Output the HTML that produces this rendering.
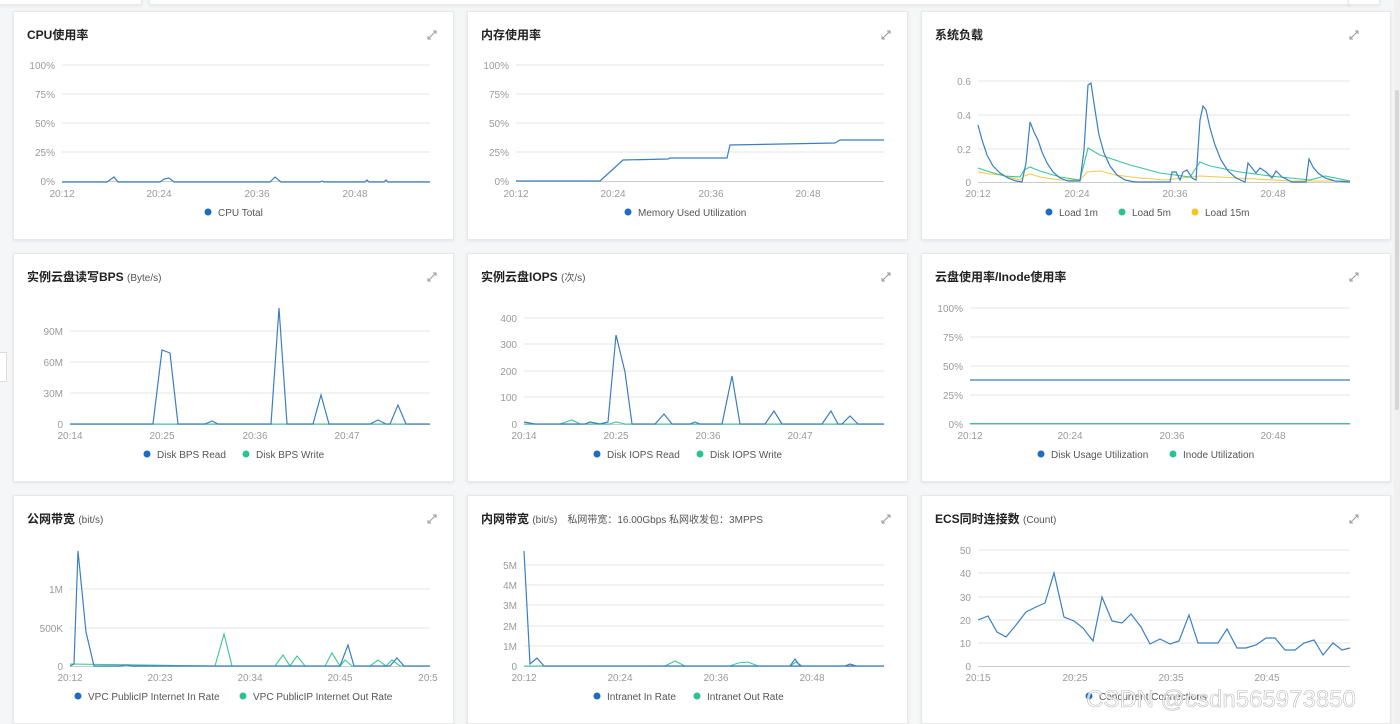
<!DOCTYPE html>
<html><head><meta charset="utf-8"><style>
html,body{margin:0;padding:0;width:1400px;height:724px;background:#f5f6f7;overflow:hidden;font-family:"Liberation Sans","Noto Sans CJK SC",sans-serif;}
.p{position:absolute;background:#fff;border:1px solid #e8e8e8;box-shadow:0 1px 3px rgba(0,0,0,.08);}
svg{position:absolute;left:0;top:0}
text{font-family:"Liberation Sans","Noto Sans CJK SC",sans-serif}
.t{font-size:12px;font-weight:bold;fill:#222}
.u{font-size:10px;fill:#555;font-weight:normal}
.ax{font-size:10px;fill:#9a9a9a}
.lg{font-size:10px;fill:#555}
.g{stroke:#e6e6e6;stroke-width:1}
.b{fill:none;stroke:#3a7fc1;stroke-width:1.2}
.gr{fill:none;stroke:#3ac59a;stroke-width:1.1}
.y{fill:none;stroke:#f3c94a;stroke-width:1.1}
.ic{stroke:#999;stroke-width:1;fill:none}
</style></head><body>
<div class="p" style="left:-2px;top:-8px;width:142px;height:11px"></div>
<div class="p" style="left:149px;top:-8px;width:1200px;height:11px"></div>
<div class="p" style="left:1348px;top:-8px;width:30px;height:11px"></div>
<div class="p" style="left:13px;top:11px;width:439px;height:227px"></div>
<div class="p" style="left:467px;top:11px;width:439px;height:227px"></div>
<div class="p" style="left:921px;top:11px;width:468px;height:227px"></div>
<div class="p" style="left:13px;top:253px;width:439px;height:227px"></div>
<div class="p" style="left:467px;top:253px;width:439px;height:227px"></div>
<div class="p" style="left:921px;top:253px;width:468px;height:227px"></div>
<div class="p" style="left:13px;top:495px;width:439px;height:227px"></div>
<div class="p" style="left:467px;top:495px;width:439px;height:227px"></div>
<div class="p" style="left:921px;top:495px;width:468px;height:227px"></div>
<div style="position:absolute;left:1394px;top:0;width:6px;height:724px;background:#f0f0f0"></div>
<div style="position:absolute;left:1395px;top:90px;width:4px;height:320px;background:#d6d6d6;border-radius:2px"></div>
<div style="position:absolute;left:-3px;top:352px;width:8px;height:28px;border:1px solid #ddd;background:#fff"></div>
<svg width="1400" height="724">
<g class="ic">
<path d="M428 39l8-8M433 31h3v3M428 36v3h3"/>
<path d="M882 39l8-8M887 31h3v3M882 36v3h3"/>
<path d="M1350 39l8-8M1355 31h3v3M1350 36v3h3"/>
<path d="M428 281l8-8M433 273h3v3M428 278v3h3"/>
<path d="M882 281l8-8M887 273h3v3M882 278v3h3"/>
<path d="M1350 281l8-8M1355 273h3v3M1350 278v3h3"/>
<path d="M428 523l8-8M433 515h3v3M428 520v3h3"/>
<path d="M882 523l8-8M887 515h3v3M882 520v3h3"/>
<path d="M1350 523l8-8M1355 515h3v3M1350 520v3h3"/>
</g>
<text x="27" y="39" class="t">CPU使用率</text>
<text x="481" y="39" class="t">内存使用率</text>
<text x="935" y="39" class="t">系统负载</text>
<text x="27" y="281" class="t">实例云盘读写BPS <tspan class="u">(Byte/s)</tspan></text>
<text x="481" y="281" class="t">实例云盘IOPS <tspan class="u">(次/s)</tspan></text>
<text x="935" y="281" class="t">云盘使用率/Inode使用率</text>
<text x="27" y="523" class="t">公网带宽 <tspan class="u">(bit/s)</tspan></text>
<text x="481" y="523" class="t">内网带宽 <tspan class="u">(bit/s)</tspan><tspan class="u" dx="10" fill="#888">私网带宽：16.00Gbps 私网收发包：3MPPS</tspan></text>
<text x="935" y="523" class="t">ECS同时连接数 <tspan class="u">(Count)</tspan></text>

<g class="g"><path d="M62 65H430M62 94H430M62 123H430M62 152H430"/></g>
<path d="M62 181.5H430" stroke="#ccc"/>
<g class="ax" text-anchor="end"><text x="55" y="69">100%</text><text x="55" y="98">75%</text><text x="55" y="127">50%</text><text x="55" y="156">25%</text><text x="55" y="185">0%</text></g>
<g class="ax" text-anchor="middle"><text x="62" y="197">20:12</text><text x="159" y="197">20:24</text><text x="257" y="197">20:36</text><text x="355" y="197">20:48</text></g>
<polyline class="b" points="62,182 107,182 114,177 118,182 160,182 164,179 169,178 174,182 270,182 275,177 281,182 320,182 322,181 324,182 365,182 367,180 369,182 384,182 386,180 388,182 430,182"/>
<circle cx="208" cy="212" r="3.5" fill="#1e6bc0"/><text x="218" y="216" class="lg">CPU Total</text>

<g class="g"><path d="M516 65H884M516 94H884M516 123H884M516 152H884"/></g>
<path d="M516 181.5H884" stroke="#ccc"/>
<g class="ax" text-anchor="end"><text x="509" y="69">100%</text><text x="509" y="98">75%</text><text x="509" y="127">50%</text><text x="509" y="156">25%</text><text x="509" y="185">0%</text></g>
<g class="ax" text-anchor="middle"><text x="516" y="197">20:12</text><text x="613" y="197">20:24</text><text x="711" y="197">20:36</text><text x="808" y="197">20:48</text></g>
<polyline class="b" points="516,181 600,181 623,160 668,159 670,158 727,158 730,145 782,144 835,143 840,140 884,140"/>
<circle cx="628" cy="212" r="3.5" fill="#1e6bc0"/><text x="638" y="216" class="lg">Memory Used Utilization</text>

<g class="g"><path d="M978 81H1350M978 115H1350M978 149H1350"/></g>
<path d="M978 182.5H1350" stroke="#ccc"/>
<g class="ax" text-anchor="end"><text x="971" y="85">0.6</text><text x="971" y="119">0.4</text><text x="971" y="153">0.2</text><text x="971" y="186">0</text></g>
<g class="ax" text-anchor="middle"><text x="978" y="197">20:12</text><text x="1077" y="197">20:24</text><text x="1175" y="197">20:36</text><text x="1273" y="197">20:48</text></g>
<polyline class="y" points="978,172 990,174 1000,175 1020,180 1024,176 1030,174 1040,177 1060,180 1080,180 1087,172 1100,171 1115,175 1140,178 1165,180 1200,176 1220,177 1255,179 1290,181 1350,181"/>
<polyline class="gr" points="978,168 990,172 1005,176 1020,177 1024,170 1030,167 1040,171 1060,177 1080,180 1088,148 1100,155 1130,165 1160,173 1190,177 1200,162 1210,166 1240,172 1270,176 1290,178 1310,180 1325,176 1350,181"/>
<polyline class="b" points="978,125 982,140 987,155 993,166 1000,173 1008,178 1016,181 1022,182 1026,163 1030,122 1034,132 1038,140 1042,152 1047,163 1053,172 1060,178 1068,181 1080,181 1084,150 1088,85 1091,83 1095,110 1099,135 1104,153 1110,166 1117,175 1125,180 1135,182 1170,182 1172,172 1176,172 1180,180 1183,172 1187,170 1192,178 1196,180 1200,120 1203,106 1206,110 1210,128 1215,145 1221,160 1228,171 1236,178 1245,182 1248,163 1252,168 1256,173 1260,168 1266,172 1272,178 1276,171 1282,177 1292,182 1306,182 1309,159 1313,167 1318,173 1325,178 1335,181 1350,182"/>
<circle cx="1049" cy="212" r="3.5" fill="#1e6bc0"/><text x="1059" y="216" class="lg">Load 1m</text>
<circle cx="1122" cy="212" r="3.5" fill="#2bc28f"/><text x="1132" y="216" class="lg">Load 5m</text>
<circle cx="1195" cy="212" r="3.5" fill="#f5c518"/><text x="1205" y="216" class="lg">Load 15m</text>

<g class="g"><path d="M70 331H430M70 362H430M70 393H430"/></g>
<path d="M70 424.5H430" stroke="#ccc"/>
<g class="ax" text-anchor="end"><text x="63" y="335">90M</text><text x="63" y="366">60M</text><text x="63" y="397">30M</text><text x="63" y="428">0</text></g>
<g class="ax" text-anchor="middle"><text x="70" y="439">20:14</text><text x="162" y="439">20:25</text><text x="255" y="439">20:36</text><text x="347" y="439">20:47</text></g>
<polyline class="gr" points="70,424 430,424"/>
<polyline class="b" points="70,424 153,424 162,350 170,353 178,424 205,424 212,421 218,424 271,424 279,308 287,424 313,424 321,395 329,424 370,424 378,420 386,424 390,424 398,405 406,424 430,424"/>
<circle cx="147" cy="454" r="3.5" fill="#1e6bc0"/><text x="157" y="458" class="lg">Disk BPS Read</text>
<circle cx="246" cy="454" r="3.5" fill="#2bc28f"/><text x="256" y="458" class="lg">Disk BPS Write</text>

<g class="g"><path d="M524 318H884M524 344H884M524 371H884M524 397H884"/></g>
<path d="M524 424.5H884" stroke="#ccc"/>
<g class="ax" text-anchor="end"><text x="517" y="322">400</text><text x="517" y="348">300</text><text x="517" y="375">200</text><text x="517" y="401">100</text><text x="517" y="428">0</text></g>
<g class="ax" text-anchor="middle"><text x="524" y="439">20:14</text><text x="616" y="439">20:25</text><text x="708" y="439">20:36</text><text x="800" y="439">20:47</text></g>
<polyline class="gr" points="524,424 560,424 572,420 580,424 610,424 616,422 625,424 884,424"/>
<polyline class="b" points="524,422 535,424 585,424 590,422 600,424 608,422 616,335 625,372 632,424 655,424 664,414 672,424 690,424 695,422 700,424 722,424 732,376 740,424 765,424 774,411 782,424 822,424 831,411 838,424 842,424 850,416 858,424 884,424"/>
<circle cx="597" cy="454" r="3.5" fill="#1e6bc0"/><text x="607" y="458" class="lg">Disk IOPS Read</text>
<circle cx="700" cy="454" r="3.5" fill="#2bc28f"/><text x="710" y="458" class="lg">Disk IOPS Write</text>

<g class="g"><path d="M970 308H1350M970 337H1350M970 366H1350M970 395H1350"/></g>
<path d="M970 424.5H1350" stroke="#ccc"/>
<g class="ax" text-anchor="end"><text x="963" y="312">100%</text><text x="963" y="341">75%</text><text x="963" y="370">50%</text><text x="963" y="399">25%</text><text x="963" y="428">0%</text></g>
<g class="ax" text-anchor="middle"><text x="970" y="439">20:12</text><text x="1070" y="439">20:24</text><text x="1172" y="439">20:36</text><text x="1273" y="439">20:48</text></g>
<path class="b" d="M970 380H1350"/><path class="gr" d="M970 423.5H1350"/>
<circle cx="1041" cy="454" r="3.5" fill="#1e6bc0"/><text x="1051" y="458" class="lg">Disk Usage Utilization</text>
<circle cx="1173" cy="454" r="3.5" fill="#2bc28f"/><text x="1183" y="458" class="lg">Inode Utilization</text>

<g class="g"><path d="M70 589H430M70 628H430"/></g>
<path d="M70 666.5H430" stroke="#ccc"/>
<g class="ax" text-anchor="end"><text x="63" y="593">1M</text><text x="63" y="632">500K</text><text x="63" y="670">0</text></g>
<g class="ax" text-anchor="middle"><text x="70" y="681">20:12</text><text x="160" y="681">20:23</text><text x="250" y="681">20:34</text><text x="340" y="681">20:45</text><text x="428" y="681">20:5</text></g>
<polyline class="gr" points="70,664 215,666 224,634 232,666 275,666 283,655 290,666 297,656 305,666 325,666 332,653 340,666 345,660 352,666 370,666 378,660 386,666 392,660 400,666 430,666"/>
<polyline class="b" points="70,666 74,664 78,551 86,632 94,666 120,666 126,665 132,666 340,666 348,645 354,666 390,666 397,658 404,666 430,666"/>
<circle cx="78" cy="696" r="3.5" fill="#1e6bc0"/><text x="88" y="700" class="lg">VPC PublicIP Internet In Rate</text>
<circle cx="243" cy="696" r="3.5" fill="#2bc28f"/><text x="253" y="700" class="lg">VPC PublicIP Internet Out Rate</text>

<g class="g"><path d="M524 565H884M524 585H884M524 605H884M524 626H884M524 646H884"/></g>
<path d="M524 666.5H884" stroke="#ccc"/>
<g class="ax" text-anchor="end"><text x="517" y="569">5M</text><text x="517" y="589">4M</text><text x="517" y="609">3M</text><text x="517" y="630">2M</text><text x="517" y="650">1M</text><text x="517" y="670">0</text></g>
<g class="ax" text-anchor="middle"><text x="524" y="681">20:12</text><text x="620" y="681">20:24</text><text x="716" y="681">20:36</text><text x="812" y="681">20:48</text></g>
<polyline class="gr" points="524,666 665,666 675,661 685,666 730,666 738,663 748,662 758,666 790,666 796,662 802,666 884,666"/>
<polyline class="b" points="524,551 530,664 537,658 544,666 884,666 790,666 795,659 800,666 845,666 850,664 856,666"/>
<circle cx="597" cy="696" r="3.5" fill="#1e6bc0"/><text x="607" y="700" class="lg">Intranet In Rate</text>
<circle cx="697" cy="696" r="3.5" fill="#2bc28f"/><text x="707" y="700" class="lg">Intranet Out Rate</text>

<g class="g"><path d="M978 550H1350M978 573H1350M978 597H1350M978 620H1350M978 643H1350"/></g>
<path d="M978 666.5H1350" stroke="#ccc"/>
<g class="ax" text-anchor="end"><text x="971" y="554">50</text><text x="971" y="577">40</text><text x="971" y="601">30</text><text x="971" y="624">20</text><text x="971" y="647">10</text><text x="971" y="670">0</text></g>
<g class="ax" text-anchor="middle"><text x="978" y="681">20:15</text><text x="1075" y="681">20:25</text><text x="1171" y="681">20:35</text><text x="1267" y="681">20:45</text></g>
<polyline class="b" points="978,620 988,616 997,632 1006,637 1016,625 1026,612 1036,607 1045,603 1054,573 1064,617 1074,621 1083,628 1093,641 1102,597 1112,621 1122,623 1131,614 1141,627 1150,644 1160,639 1170,644 1179,641 1189,615 1198,643 1208,643 1218,643 1227,629 1237,648 1246,648 1256,645 1266,638 1275,638 1285,650 1295,650 1304,643 1314,640 1323,655 1333,643 1342,650 1350,648"/>
<circle cx="1089" cy="696" r="3.5" fill="#1e6bc0"/><text x="1099" y="700" class="lg">Concurrent Connections</text>
<text x="1086" y="707" font-size="24" fill="#fff" fill-opacity=".75" stroke="#bbb" stroke-width=".6" font-family="Liberation Sans,sans-serif">CSDN @csdn565973850</text>
</svg>
</body></html>
